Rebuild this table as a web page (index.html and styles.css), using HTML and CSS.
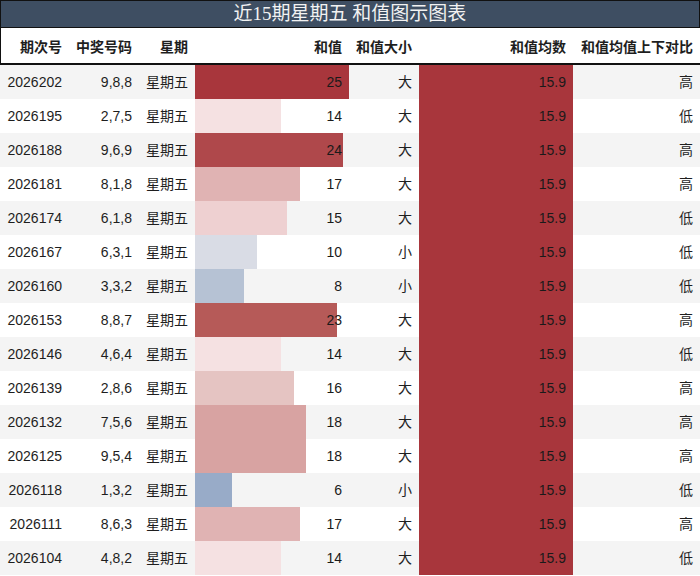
FILE: index.html
```html
<!DOCTYPE html>
<html lang="zh">
<head>
<meta charset="utf-8">
<link rel="stylesheet" href="styles.css">
</head>
<body>
<div class="chart">
  <div class="title">近15期星期五 和值图示图表</div>
  <div class="row head">
    <div class="cell">期次号</div>
    <div class="cell">中奖号码</div>
    <div class="cell">星期</div>
    <div class="cell">和值</div>
    <div class="cell">和值大小</div>
    <div class="cell">和值均数</div>
    <div class="cell">和值均值上下对比</div>
  </div>
  <div class="body" id="rows"></div>
</div>
<script src="app.js"></script>
</body>
</html>
```
FILE: styles.css
```css
* { box-sizing: border-box; }
html, body { margin: 0; padding: 0; background: #fff; }
body {
  width: 700px;
  height: 576px;
  overflow: hidden;
  font-family: "Liberation Sans", "Noto Sans CJK SC", sans-serif;
  font-size: 14px;
  color: #1e1e1e;
}
.chart { width: 700px; }
.title {
  height: 28px;
  border: 1px solid #111;
  background: #3e4e62;
  color: #f2f2f2;
  font-family: "Liberation Serif", "Noto Sans CJK SC", serif;
  font-size: 19px;
  line-height: 26px;
  text-align: center;
}
.row {
  display: grid;
  grid-template-columns: 69px 70px 56px 154px 70px 154px 127px;
}
.head {
  grid-template-columns: 68px 70px 56px 154px 70px 154px 127px;
  height: 37px;
  border-bottom: 2px solid #111;
  border-left: 1px solid #111;
  font-weight: bold;
  align-items: center;
}
.cell {
  text-align: right;
  padding-right: 7px;
  white-space: nowrap;
}
.data { height: 34px; align-items: stretch; }
.data:nth-child(odd) { background: #f4f4f4; }
.data:nth-child(even) { background: #fff; }
.data .cell { line-height: 34px; }
.barcell {
  display: grid;
  padding-right: 0;
}
.barcell > * { grid-area: 1 / 1; }
.bar { height: 34px; }
.barval { padding-right: 7px; text-align: right; line-height: 34px; color: #1a1a1a; }
.mean .bar { background: #a8363c; }
```
FILE: app.js
```js
var data = [
  ["2026202","9,8,8",25,"大","高"],
  ["2026195","2,7,5",14,"大","低"],
  ["2026188","9,6,9",24,"大","高"],
  ["2026181","8,1,8",17,"大","高"],
  ["2026174","6,1,8",15,"大","低"],
  ["2026167","6,3,1",10,"小","低"],
  ["2026160","3,3,2",8,"小","低"],
  ["2026153","8,8,7",23,"大","高"],
  ["2026146","4,6,4",14,"大","低"],
  ["2026139","2,8,6",16,"大","高"],
  ["2026132","7,5,6",18,"大","高"],
  ["2026125","9,5,4",18,"大","高"],
  ["2026118","1,3,2",6,"小","低"],
  ["2026111","8,6,3",17,"大","高"],
  ["2026104","4,8,2",14,"大","低"]
];
var colors = {
  25:"#a8363c", 24:"#af484b", 23:"#b65a58", 18:"#d8a3a2", 17:"#e0b3b3",
  16:"#e5c4c2", 15:"#eed0d1", 14:"#f5e1e2", 10:"#d9dce5", 8:"#b6c2d4", 6:"#98abc8"
};
var html = "";
data.forEach(function (d) {
  var w = (d[2] / 25 * 100).toFixed(2);
  html += '<div class="row data">' +
    '<div class="cell">' + d[0] + '</div>' +
    '<div class="cell">' + d[1] + '</div>' +
    '<div class="cell">星期五</div>' +
    '<div class="cell barcell"><div class="bar" style="width:' + w + '%;background:' + colors[d[2]] + '"></div><div class="barval">' + d[2] + '</div></div>' +
    '<div class="cell">' + d[3] + '</div>' +
    '<div class="cell barcell mean"><div class="bar" style="width:100%"></div><div class="barval">15.9</div></div>' +
    '<div class="cell">' + d[4] + '</div>' +
    '</div>';
});
document.getElementById("rows").innerHTML = html;
```
